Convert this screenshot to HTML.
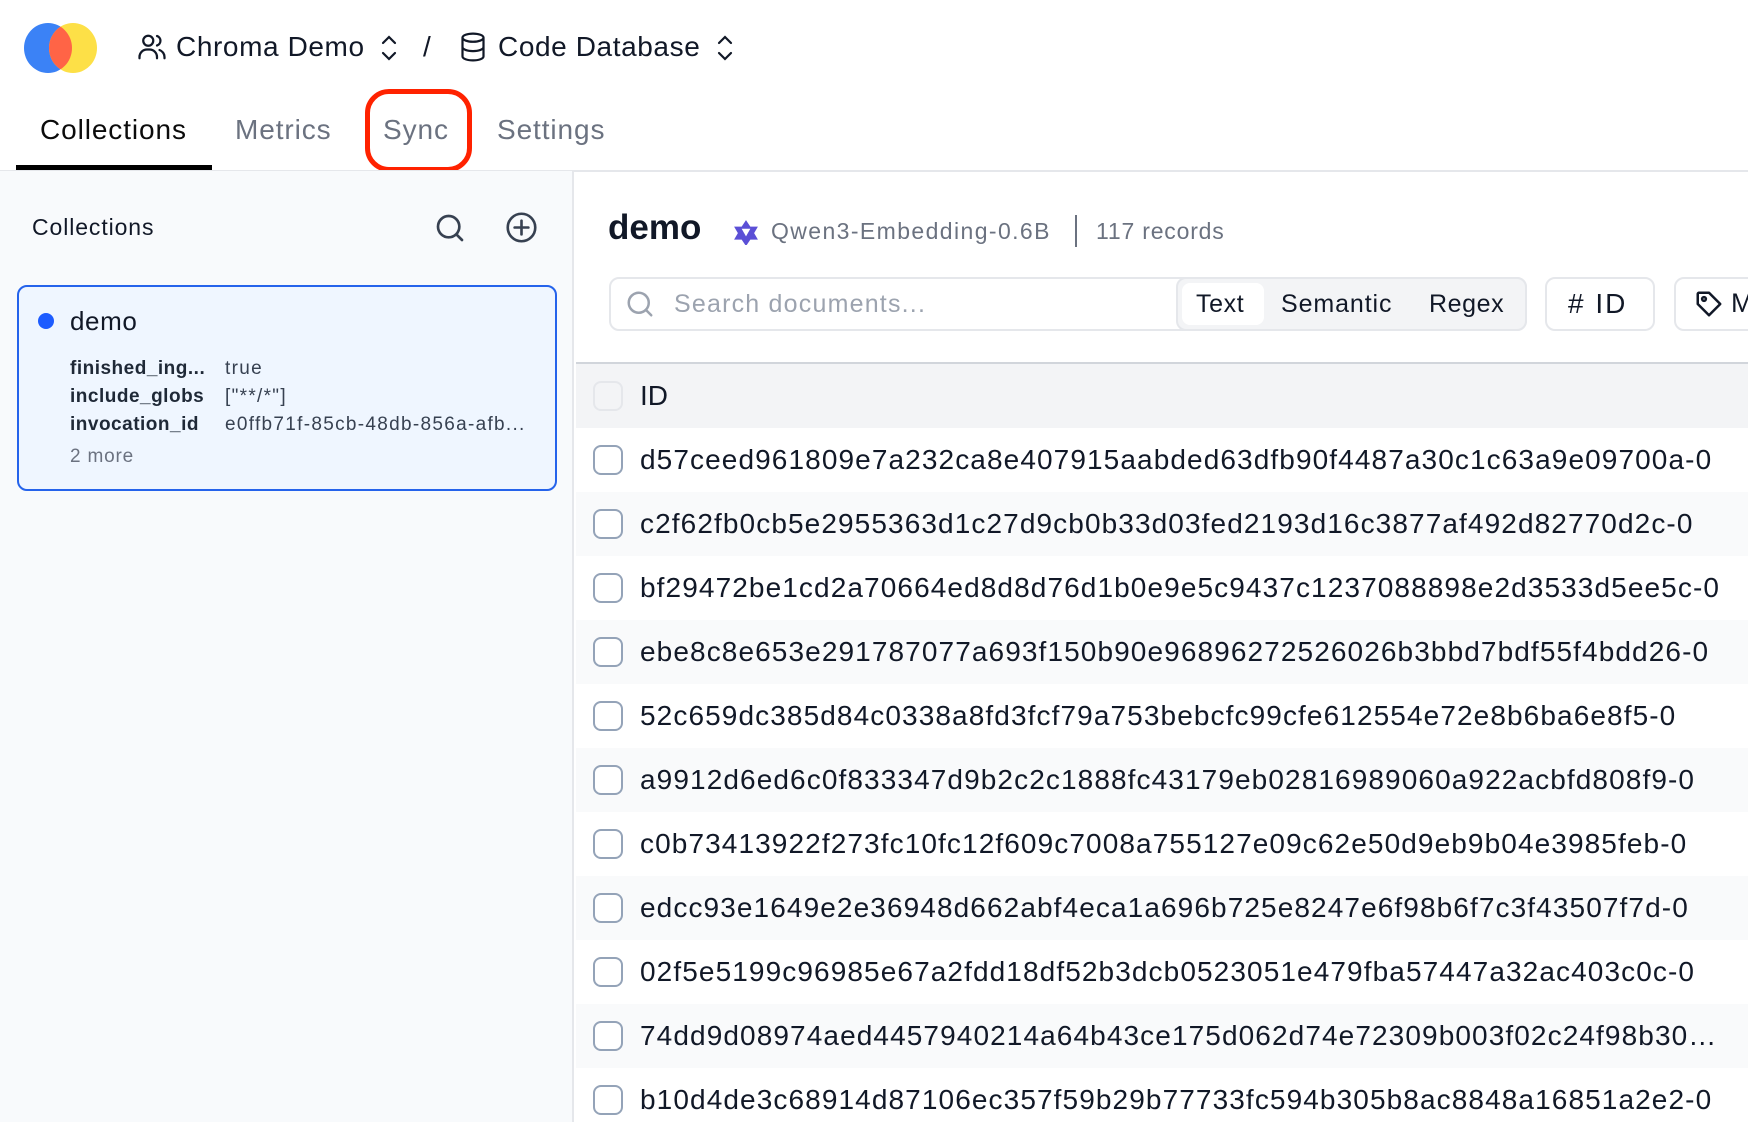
<!DOCTYPE html>
<html><head><meta charset="utf-8"><style>
*{box-sizing:border-box;margin:0;padding:0}
body{width:1748px;height:1122px;overflow:hidden;background:#fff;font-family:"Liberation Sans",Arial,sans-serif;color:#111827;position:relative}
.abs{position:absolute;white-space:nowrap}
.side{position:absolute;left:0;top:171px;width:574px;height:951px;background:#f8fafc;border-right:2px solid #e5e7eb}
.row{position:absolute;left:576px;width:1172px;height:64px}
.row.alt{background:#f9fafb}
.cb{position:absolute;left:17px;top:17px;width:30px;height:30px;border:2px solid #94a3b8;border-radius:8px;background:#fff}
.rt{position:absolute;left:64px;top:0;line-height:64px;font-size:28px;letter-spacing:1.1px;color:#111827;width:1090px;overflow:hidden;text-overflow:ellipsis;white-space:nowrap}
</style></head><body>
<!-- logo -->
<svg class="abs" style="left:22px;top:22px" width="78" height="52" viewBox="0 0 78 52">
<defs><clipPath id="c"><ellipse cx="51" cy="26" rx="24" ry="25"/></clipPath></defs>
<ellipse cx="26" cy="26" rx="24" ry="25" fill="#3b82f6"/>
<ellipse cx="51" cy="26" rx="24" ry="25" fill="#fde047"/>
<ellipse cx="26" cy="26" rx="24" ry="25" fill="#ff6446" clip-path="url(#c)"/>
</svg>
<!-- breadcrumb -->
<svg class="abs" style="left:136px;top:32px" width="32" height="30" viewBox="0 0 24 24" fill="none" stroke="#111827" stroke-width="1.8" stroke-linecap="round"><circle cx="9" cy="7" r="4"/><path d="M2 21v-1a6 6 0 0 1 6-6h2a6 6 0 0 1 6 6v1M16 3.2a4 4 0 0 1 0 7.6M22 21v-1a6 6 0 0 0-4-5.6"/></svg>
<div class="abs" style="left:176px;top:31px;font-size:28px;letter-spacing:0.6px;color:#111827">Chroma Demo</div>
<svg class="abs" style="left:380px;top:33px" width="18" height="30" viewBox="0 0 18 30" fill="none" stroke="#111827" stroke-width="2.2" stroke-linecap="round"><path d="M3 10l6-6 6 6M3 20l6 6 6-6"/></svg>
<div class="abs" style="left:423px;top:31px;font-size:28px;color:#111827">/</div>
<svg class="abs" style="left:459px;top:31px" width="28" height="32" viewBox="0 0 24 26" fill="none" stroke="#111827" stroke-width="1.9"><ellipse cx="12" cy="5" rx="9" ry="3.5"/><path d="M3 5v16c0 2 4 3.5 9 3.5s9-1.5 9-3.5V5M3 13c0 2 4 3.5 9 3.5s9-1.5 9-3.5"/></svg>
<div class="abs" style="left:498px;top:31px;font-size:28px;letter-spacing:0.6px;color:#111827">Code Database</div>
<svg class="abs" style="left:716px;top:33px" width="18" height="30" viewBox="0 0 18 30" fill="none" stroke="#111827" stroke-width="2.2" stroke-linecap="round"><path d="M3 10l6-6 6 6M3 20l6 6 6-6"/></svg>
<!-- tabs -->
<div class="abs" style="left:40px;top:114px;font-size:28px;letter-spacing:0.9px;color:#0b0b0b">Collections</div>
<div class="abs" style="left:235px;top:114px;font-size:28px;letter-spacing:0.9px;color:#6b7280">Metrics</div>
<div class="abs" style="left:383px;top:114px;font-size:28px;letter-spacing:0.9px;color:#6b7280">Sync</div>
<div class="abs" style="left:497px;top:114px;font-size:28px;letter-spacing:0.9px;color:#6b7280">Settings</div>
<div class="abs" style="left:365px;top:89px;width:107px;height:83px;border:5px solid #ff2200;border-radius:24px"></div>
<div class="abs" style="left:0;top:170px;width:1748px;height:2px;background:#e5e7eb"></div>
<div class="abs" style="left:16px;top:165px;width:196px;height:5px;background:#000"></div>
<!-- sidebar -->
<div class="side"></div>
<div class="abs" style="left:32px;top:214px;font-size:23px;letter-spacing:0.9px;color:#111827">Collections</div>
<svg class="abs" style="left:434px;top:212px" width="32" height="32" viewBox="0 0 24 24" fill="none" stroke="#374151" stroke-width="2" stroke-linecap="round"><circle cx="11" cy="11" r="8"/><path d="M17 17l4 4"/></svg>
<svg class="abs" style="left:505px;top:211px" width="33" height="33" viewBox="0 0 24 24" fill="none" stroke="#374151" stroke-width="1.9" stroke-linecap="round"><circle cx="12" cy="12" r="10"/><path d="M12 7v10M7 12h10"/></svg>
<div class="abs" style="left:17px;top:285px;width:540px;height:206px;border:2px solid #2563eb;border-radius:10px;background:#eff6ff"></div>
<div class="abs" style="left:38px;top:313px;width:16px;height:16px;border-radius:50%;background:#1d5cff"></div>
<div class="abs" style="left:70px;top:306px;font-size:26px;letter-spacing:0.6px;color:#111827">demo</div>
<div class="abs" style="left:70px;top:355px;font-size:19px;font-weight:bold;letter-spacing:0.5px;color:#1f2937;line-height:28px">finished_ing...<br>include_globs<br>invocation_id</div>
<div class="abs" style="left:225px;top:355px;font-size:19px;letter-spacing:1.3px;color:#374151;line-height:28px">true<br>["**/*"]<br>e0ffb71f-85cb-48db-856a-afb...</div>
<div class="abs" style="left:70px;top:446px;font-size:19px;letter-spacing:0.8px;color:#6b7280">2 more</div>
<!-- main header -->
<div class="abs" style="left:608px;top:208px;font-size:35px;font-weight:bold;color:#111827">demo</div>
<svg class="abs" style="left:733px;top:219px" width="26" height="26" viewBox="0 0 24 24"><path d="M12 1l4 6h7l-3.5 6 3.5 6h-7l-4 6-4-6H1l3.5-6L1 7h7z" fill="#5b4fd6"/><path d="M8 9h8l-4 7z" fill="#fff"/></svg>
<div class="abs" style="left:771px;top:218px;font-size:23px;letter-spacing:1.4px;color:#6b7280">Qwen3-Embedding-0.6B</div>
<div class="abs" style="left:1075px;top:215px;width:2px;height:32px;background:#6b7280"></div>
<div class="abs" style="left:1096px;top:218px;font-size:23px;letter-spacing:0.8px;color:#6b7280">117 records</div>
<!-- search -->
<div class="abs" style="left:609px;top:277px;width:918px;height:54px;border:2px solid #e5e7eb;border-radius:10px;background:#fff"></div>
<svg class="abs" style="left:625px;top:289px" width="30" height="30" viewBox="0 0 24 24" fill="none" stroke="#9ca3af" stroke-width="2" stroke-linecap="round"><circle cx="11" cy="11" r="8"/><path d="M17 17l4 4"/></svg>
<div class="abs" style="left:674px;top:290px;font-size:25px;letter-spacing:1.2px;color:#9ca3af">Search documents...</div>
<div class="abs" style="left:1176px;top:277px;width:351px;height:54px;border:2px solid #e5e7eb;border-radius:10px;background:#f3f4f6"></div>
<div class="abs" style="left:1182px;top:283px;width:82px;height:42px;border-radius:8px;background:#fff"></div>
<div class="abs" style="left:1196px;top:290px;font-size:25px;letter-spacing:0.6px;color:#111827">Text</div>
<div class="abs" style="left:1281px;top:290px;font-size:25px;letter-spacing:0.9px;color:#111827">Semantic</div>
<div class="abs" style="left:1429px;top:290px;font-size:25px;letter-spacing:0.6px;color:#111827">Regex</div>
<div class="abs" style="left:1545px;top:277px;width:110px;height:54px;border:2px solid #e5e7eb;border-radius:10px;background:#fff"></div>
<div class="abs" style="left:1568px;top:288px;font-size:28px;letter-spacing:2px;color:#111827"># ID</div>
<div class="abs" style="left:1674px;top:277px;width:110px;height:54px;border:2px solid #e5e7eb;border-radius:10px;background:#fff"></div>
<svg class="abs" style="left:1694px;top:289px" width="30" height="30" viewBox="0 0 24 24" fill="none" stroke="#111827" stroke-width="2" stroke-linejoin="round"><path d="M3 12V4a1 1 0 0 1 1-1h8l9 9-9 9z"/><circle cx="8" cy="8" r="1.5"/></svg>
<div class="abs" style="left:1731px;top:288px;font-size:27px;color:#111827">M</div>
<!-- table -->
<div class="abs" style="left:576px;top:362px;width:1172px;height:2px;background:#d1d5db"></div>
<div class="abs" style="left:576px;top:364px;width:1172px;height:64px;background:#f3f4f6"></div>
<div class="abs" style="left:593px;top:381px;width:30px;height:30px;border:2px solid #e5e7eb;border-radius:8px;background:#f3f4f6"></div>
<div class="abs" style="left:640px;top:380px;font-size:28px;color:#111827">ID</div>
<div class="row" style="top:428px"><div class="cb"></div><div class="rt">d57ceed961809e7a232ca8e407915aabded63dfb90f4487a30c1c63a9e09700a-0</div></div>
<div class="row alt" style="top:492px"><div class="cb"></div><div class="rt">c2f62fb0cb5e2955363d1c27d9cb0b33d03fed2193d16c3877af492d82770d2c-0</div></div>
<div class="row" style="top:556px"><div class="cb"></div><div class="rt">bf29472be1cd2a70664ed8d8d76d1b0e9e5c9437c1237088898e2d3533d5ee5c-0</div></div>
<div class="row alt" style="top:620px"><div class="cb"></div><div class="rt">ebe8c8e653e291787077a693f150b90e96896272526026b3bbd7bdf55f4bdd26-0</div></div>
<div class="row" style="top:684px"><div class="cb"></div><div class="rt">52c659dc385d84c0338a8fd3fcf79a753bebcfc99cfe612554e72e8b6ba6e8f5-0</div></div>
<div class="row alt" style="top:748px"><div class="cb"></div><div class="rt">a9912d6ed6c0f833347d9b2c2c1888fc43179eb02816989060a922acbfd808f9-0</div></div>
<div class="row" style="top:812px"><div class="cb"></div><div class="rt">c0b73413922f273fc10fc12f609c7008a755127e09c62e50d9eb9b04e3985feb-0</div></div>
<div class="row alt" style="top:876px"><div class="cb"></div><div class="rt">edcc93e1649e2e36948d662abf4eca1a696b725e8247e6f98b6f7c3f43507f7d-0</div></div>
<div class="row" style="top:940px"><div class="cb"></div><div class="rt">02f5e5199c96985e67a2fdd18df52b3dcb0523051e479fba57447a32ac403c0c-0</div></div>
<div class="row alt" style="top:1004px"><div class="cb"></div><div class="rt">74dd9d08974aed4457940214a64b43ce175d062d74e72309b003f02c24f98b30a1b2c3d4-0</div></div>
<div class="row" style="top:1068px"><div class="cb"></div><div class="rt">b10d4de3c68914d87106ec357f59b29b77733fc594b305b8ac8848a16851a2e2-0</div></div>
</body></html>
